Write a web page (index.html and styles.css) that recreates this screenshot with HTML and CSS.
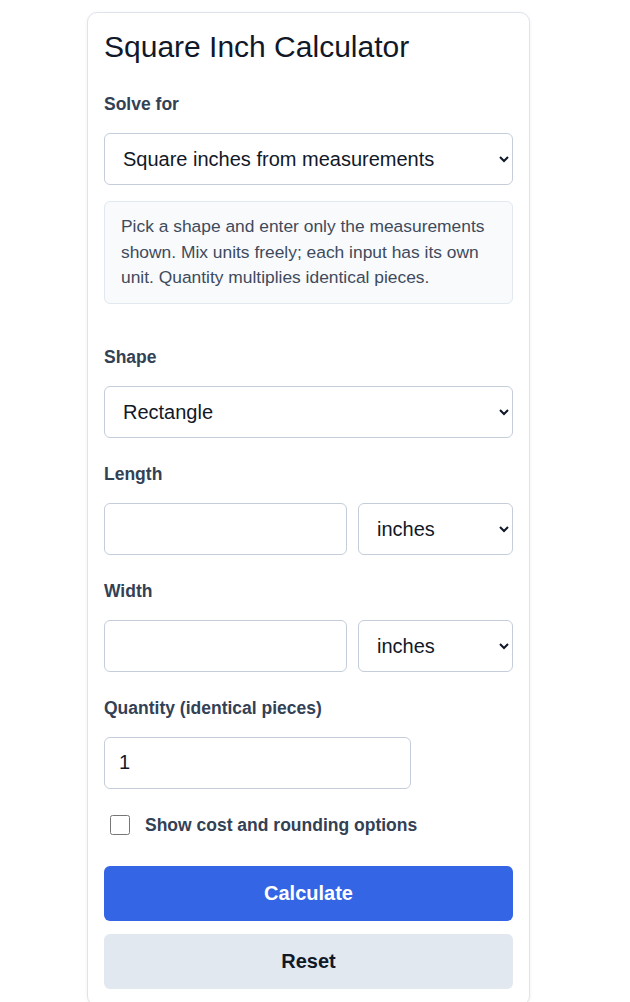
FILE: index.html
```html
<!DOCTYPE html>
<html>
<head>
  <link rel="stylesheet" href="styles.css">
</head>
<body>
  <div class="page">
    <div class="calc-card">
      <h1 class="calc-title">Square Inch Calculator</h1>

      <!-- Mode -->
      <div class="field">
        <label class="field-label" for="solveFor">Solve for</label>
        <select id="solveFor" class="control">
          <option>Square inches from measurements</option>
          <option>Missing side from square inches</option>
        </select>
      </div>

      <div class="info-box">
        Pick a shape and enter only the measurements shown. Mix units freely; each input has its own unit. Quantity multiplies identical pieces.
      </div>

      <!-- Shape inputs -->
      <div class="field field-spaced">
        <label class="field-label" for="shape">Shape</label>
        <select id="shape" class="control">
          <option>Rectangle</option>
          <option>Square</option>
          <option>Circle</option>
          <option>Triangle</option>
        </select>
      </div>

      <div class="field">
        <label class="field-label" for="length">Length</label>
        <div class="unit-row">
          <input id="length" class="control" type="number">
          <select class="control">
            <option>inches</option>
            <option>feet</option>
            <option>cm</option>
          </select>
        </div>
      </div>

      <div class="field">
        <label class="field-label" for="width">Width</label>
        <div class="unit-row">
          <input id="width" class="control" type="number">
          <select class="control">
            <option>inches</option>
            <option>feet</option>
            <option>cm</option>
          </select>
        </div>
      </div>

      <div class="field">
        <label class="field-label" for="qty">Quantity (identical pieces)</label>
        <input id="qty" class="control qty-input" type="number" value="1">
      </div>

      <label class="check-row">
        <input type="checkbox" class="check-box">
        <span>Show cost and rounding options</span>
      </label>

      <div class="actions">
        <button class="btn btn-primary">Calculate</button>
        <button class="btn btn-secondary">Reset</button>
      </div>
    </div>
  </div>
</body>
</html>
```

FILE: styles.css
```css
* {
  margin: 0;
  padding: 0;
  box-sizing: border-box;
}

body {
  font-family: "Liberation Sans", Arial, sans-serif;
  background: #ffffff;
  color: #111827;
}

/* leaves room on the right like the scrollbar gutter */
.page {
  padding: 12px 13px 12px 0;
}

.calc-card {
  width: 443px;
  margin: 0 auto;
  padding: 16px;
  background: #fff;
  border: 1px solid #dde4ee;
  border-radius: 10px;
  box-shadow: 0 1px 4px rgba(15, 23, 42, 0.05);
}

.calc-title {
  font-size: 30px;
  font-weight: normal;
  line-height: 36px;
  color: #111827;
  margin-bottom: 26px;
}

.field {
  margin-bottom: 23px;
}

.field-spaced {
  margin-top: 40px;
}

.field-label {
  display: block;
  font-size: 17.5px;
  font-weight: bold;
  line-height: 26px;
  color: #334155;
  margin-bottom: 16px;
}

.control {
  display: block;
  width: 100%;
  height: 52px;
  padding: 0 14px;
  font-family: inherit;
  font-size: 20px;
  color: #111827;
  background: #fff;
  border: 1px solid #c4cdd9;
  border-radius: 6px;
}

.field:first-of-type {
  margin-bottom: 16px;
}

.info-box {
  background: #f8fafc;
  border: 1px solid #e2e8f0;
  border-radius: 6px;
  padding: 12px 16px;
  font-size: 17.4px;
  line-height: 25.5px;
  color: #3f4b5c;
}

.unit-row {
  display: grid;
  grid-template-columns: 1fr 155px;
  gap: 11px;
}

.qty-input {
  width: 75%;
}

.check-row {
  display: flex;
  align-items: center;
  gap: 15px;
  font-size: 17.5px;
  font-weight: bold;
  line-height: 26px;
  color: #334155;
}

.check-box {
  width: 20px;
  height: 20px;
  margin-left: 6px;
}

.actions {
  margin-top: 28px;
  display: flex;
  flex-direction: column;
  gap: 13px;
}

.btn {
  height: 55px;
  border: none;
  border-radius: 6px;
  font-family: inherit;
  font-size: 20px;
  font-weight: bold;
  cursor: pointer;
}

.btn-primary {
  background: #3465e4;
  color: #fff;
}

.btn-secondary {
  background: #e2e8f0;
  color: #111827;
}
```
